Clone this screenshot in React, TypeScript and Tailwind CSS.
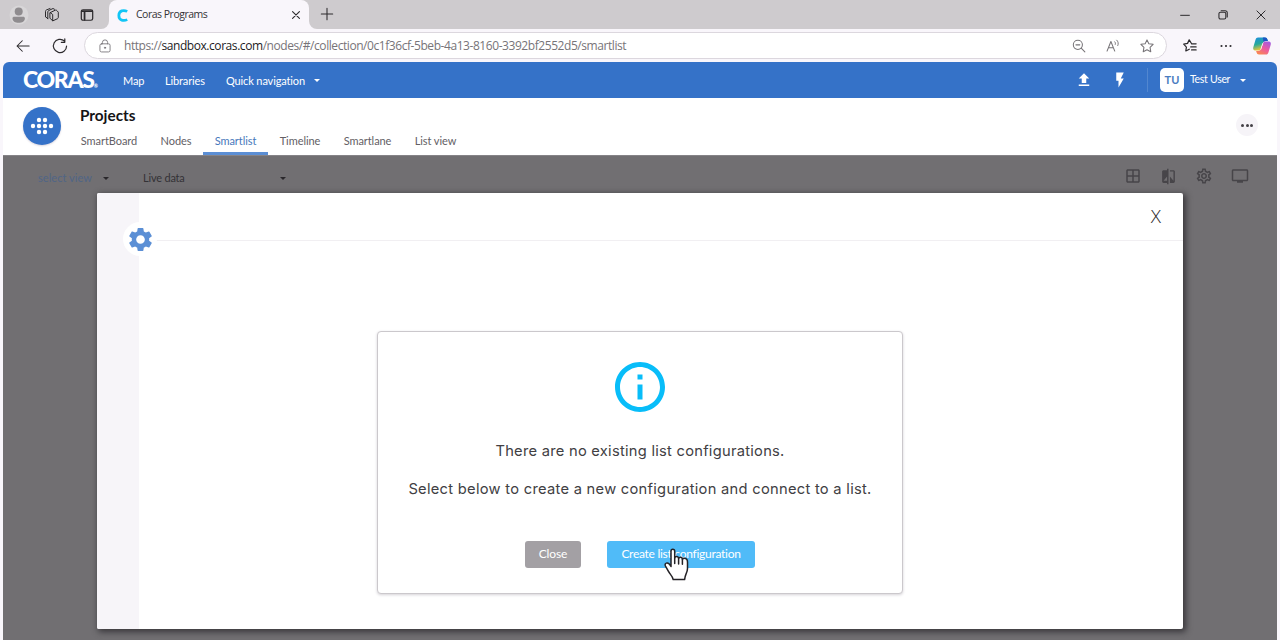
import type { ReactNode } from "react"
import {
  MdCompare,
  MdFileUpload,
  MdFlashOn,
  MdInfoOutline,
  MdOutlineSettings,
  MdOutlineTv,
  MdOutlineWindow,
  MdSettings,
} from "react-icons/md"

const navItems = [
  { label: "Map", width: "w-[22px]", gap: "mr-[20px]" },
  { label: "Libraries", width: "w-[40px]", gap: "mr-[21px]" },
  { label: "Quick navigation", width: "w-[78px]", gap: "mr-[10px]" },
]

const tabs = [
  { label: "SmartBoard", width: "w-[80px]" },
  { label: "Nodes", width: "w-[54px]" },
  { label: "Smartlist", width: "w-[65px]", active: true },
  { label: "Timeline", width: "w-[64px]" },
  { label: "Smartlane", width: "w-[71px]" },
  { label: "List view", width: "w-[65px]" },
]

const dots = [
  [9, 6],
  [15, 6],
  [3, 12],
  [9, 12],
  [15, 12],
  [21, 12],
  [9, 18],
  [15, 18],
]

type LineIconProps = { className?: string; children: ReactNode }

function LineIcon({ className, children }: LineIconProps) {
  return (
    <svg
      viewBox="0 0 16 16"
      className={`shrink-0 ${className ?? ""}`}
      fill="none"
      stroke="currentColor"
      strokeLinecap="round"
      strokeLinejoin="round"
    >
      {children}
    </svg>
  )
}

function Caret({ className }: { className?: string }) {
  return (
    <svg viewBox="0 0 6 3" className={`w-[6px] h-[3px] shrink-0 ${className ?? ""}`} fill="currentColor">
      <path d="M0 0h6L3 3z" />
    </svg>
  )
}

function TabStrip() {
  return (
    <div className="flex h-[29px] bg-[#f9f6fb] text-[#2c2a2d]">
      <div className="flex w-[109px] items-center rounded-br-lg bg-[#cecbce] pl-[9px]">
        <svg viewBox="0 0 20 20" className="w-5 h-5 mr-[15px] shrink-0">
          <circle cx="10" cy="10" r="9.5" fill="#d8d6d8" />
          <circle cx="9.7" cy="6.5" r="4" fill="#8f8c8f" />
          <path d="M3.5 13.2c0-1 .8-1.5 1.7-1.5h9c1 0 1.7.6 1.7 1.5 0 3-2.7 4.6-6.2 4.6s-6.2-1.6-6.2-4.6z" fill="#8f8c8f" />
        </svg>
        <LineIcon className="w-4 h-4 mr-[20px]">
          <path d="M6.2 5.6 11 3.3c.8-.4 1.5-.2 2 .4l1.3 1.5v5.3c0 .5-.3 1-.8 1.2l-4.8 2.2-2.5-2.5z" />
          <path d="m6.2 5.6 2.5 1.9v6.2M3.800 11.700V4.900c0-.6.2-1 .8-1.300L9 1.500l1.500.8M1.500 9.700V4.300c0-.6.3-1 .8-1.300L6 1.500M1.500 9.700l2.300 2" />
        </LineIcon>
        <LineIcon className="w-[14px] h-[14px]">
          <rect x="1.5" y="2" width="13" height="12" rx="2" strokeWidth="1.4" />
          <path d="M2 3.5h12M5.2 4v9.5" strokeWidth="2" />
        </LineIcon>
      </div>
      <div className="flex w-[200px] items-center bg-[#cecbce]">
        <div className="flex h-full w-full items-center rounded-t-lg bg-[#f9f6fb] pl-[8px]">
          <svg viewBox="0 0 12 14" className="w-[11px] h-[13px] mr-[8px] mt-px shrink-0">
            <path d="M11.2 2.5C7.5.8 2 1.2 2 7s5.5 6.2 9.2 4.5" fill="none" stroke="#12c5f5" strokeWidth="3" />
          </svg>
          <span className="w-[71px] whitespace-nowrap text-[10.5px] tracking-[-0.5px] text-[#343235]">Coras Programs</span>
          <LineIcon className="ml-[84px] w-[10px] h-[10px]">
            <path d="m2.5 2.5 11 11m0-11-11 11" strokeWidth="1.8" />
          </LineIcon>
        </div>
      </div>
      <div className="flex flex-1 rounded-bl-lg bg-[#cecbce]">
        <LineIcon className="ml-[11px] mt-[7px] w-[14px] h-[14px]">
          <path d="M8 1.5v13M1.5 8h13" strokeWidth="1.2" />
        </LineIcon>
        <div className="ml-auto mr-[14px] flex items-center gap-[28px]">
          <LineIcon className="w-[10px] h-[10px]">
            <path d="M1 8.5h14" strokeWidth="1.6" />
          </LineIcon>
          <LineIcon className="w-[10px] h-[10px]">
            <rect x="1.5" y="3.5" width="11" height="11" rx="2.5" strokeWidth="1.7" />
            <path d="M5 1.2h6.5c2 0 3.3 1.2 3.3 3.3V11" strokeWidth="1.7" />
          </LineIcon>
          <LineIcon className="w-[10px] h-[10px]">
            <path d="m1.5 1.5 13 13m0-13-13 13" strokeWidth="1.6" />
          </LineIcon>
        </div>
      </div>
    </div>
  )
}

function AddressBar() {
  return (
    <div className="flex h-[33px] items-center pl-[16px] text-[#2c2a2d]">
      <LineIcon className="w-[14px] h-[14px] mr-[22px]">
        <path d="M15 8H1.2m6-6-6 6 6 6" strokeWidth="1.2" />
      </LineIcon>
      <LineIcon className="w-4 h-4 mr-[16px]">
        <path d="M12.4 3A6.6 6.6 0 1 0 14.6 8M12.8.9v3.4H9.3" strokeWidth="1.2" />
      </LineIcon>
      <div className="flex h-[27px] w-[1083px] items-center rounded-full border border-[#dcd7de] bg-white pl-[13px] text-[#777478]">
        <LineIcon className="w-[14px] h-[14px] mr-[12px]">
          <rect x="2.2" y="5.5" width="11.6" height="9.3" rx="1.8" />
          <path d="M5 5.5V4a3 3 0 0 1 6 0v1.5" />
          <circle cx="8" cy="10" r=".7" fill="currentColor" />
        </LineIcon>
        <span className="whitespace-nowrap text-[12px] tracking-[-0.435px]">
          https://<span className="text-[#1d1b1e]">sandbox.coras.com</span>
          /nodes/#/collection/0c1f36cf-5beb-4a13-8160-3392bf2552d5/smartlist
        </span>
        <div className="ml-auto mr-[12px] flex items-center gap-[20px]">
          <LineIcon className="w-[14px] h-[14px]">
            <circle cx="6.7" cy="6.7" r="5.2" strokeWidth="1.2" />
            <path d="m10.5 10.5 4.2 4.2M4.5 6.7h4.4" strokeWidth="1.2" />
          </LineIcon>
          <LineIcon className="w-[14px] h-[14px]">
            <path d="m1.2 13.8 4.4-11 4.4 11M2.7 10h5.8" strokeWidth="1.2" />
            <path d="M10 3.2c.8.8 1 1.9.6 3M12.3 1.3c1.7 1.7 2.2 4 1.2 6.2" strokeWidth="1.1" />
          </LineIcon>
          <LineIcon className="w-[14px] h-[14px]">
            <path d="m8 1 2.1 4.4 4.9.7-3.5 3.5.8 4.9L8 12.2l-4.3 2.3.8-4.9L1 6.1l4.9-.7z" strokeWidth="1.2" />
          </LineIcon>
        </div>
      </div>
      <LineIcon className="ml-[16px] w-[14px] h-[14px]">
        <path d="M9.5 4.9 7.1 1 5.2 5 .8 5.9l3.1 3.3-.7 4.5 4-2M15 5.5H9.8M15 9H8.8M15 12.5H9.8" strokeWidth="1.4" />
      </LineIcon>
      <svg viewBox="0 0 12 4" className="ml-[23px] w-[12px] h-[4px] shrink-0" fill="currentColor">
        <circle cx="1.5" cy="2" r="1.05" />
        <circle cx="6" cy="2" r="1.05" />
        <circle cx="10.5" cy="2" r="1.05" />
      </svg>
      <svg viewBox="0 0 20 20" className="ml-[20px] w-5 h-5 shrink-0">
        <defs>
          <linearGradient id="copilot-a" x1="0" y1="0" x2=".3" y2="1">
            <stop offset="0" stopColor="#1b8de0" />
            <stop offset=".55" stopColor="#27a99a" />
            <stop offset="1" stopColor="#f3c634" />
          </linearGradient>
          <linearGradient id="copilot-b" x1=".8" y1="0" x2=".2" y2="1">
            <stop offset="0" stopColor="#a35be0" />
            <stop offset=".5" stopColor="#ec5aa0" />
            <stop offset="1" stopColor="#fb8a4c" />
          </linearGradient>
        </defs>
        <path d="M6 1.5h7c1.5 0 2 .8 2.4 2l.5 1.6h-2.2c-1.6 0-2.4.8-2.9 2.3L9 12.5c-.5 1.5-1.2 2-2.5 2H3.2C1.5 14.5.8 13 1.3 11.3l2.2-7.5C4 2.3 4.7 1.5 6 1.5z" fill="url(#copilot-a)" />
        <path d="M14 18.5H7c-1.5 0-2-.8-2.4-2l-.5-1.6h2.2c1.6 0 2.4-.8 2.9-2.3L11 7.5c.5-1.5 1.2-2 2.5-2h3.3c1.7 0 2.4 1.5 1.9 3.2l-2.2 7.5c-.5 1.5-1.2 2.3-2.5 2.3z" fill="url(#copilot-b)" />
        <path d="M10.8 1.5H13c1.5 0 2 .8 2.4 2l.5 1.6h-2.2c-1 0-1.7.3-2.2 1z" fill="#1d55c4" />
        <path d="m11.2 7.200-2.100 6.300h-.7l2-6.300z" fill="white" />
      </svg>
    </div>
  )
}

function TopBar() {
  return (
    <div className="flex h-[36px] items-center rounded-t-[6px] bg-[#3572c8] pl-[20px] text-[11px] text-white">
      <span className="w-[74px] whitespace-nowrap pb-px text-[23px] leading-none font-black tracking-[-1.3px]">
        CORAS<span className="text-[5px] tracking-normal">®</span>
      </span>
      <div className="mt-[2px] ml-[26px] flex items-center tracking-[-0.13px]">
        {navItems.map((item) => (
          <span key={item.label} className={`whitespace-nowrap ${item.width} ${item.gap}`}>
            {item.label}
          </span>
        ))}
        <Caret className="mb-[2px]" />
      </div>
      <MdFileUpload className="ml-auto w-[18px] h-[18px]" />
      <MdFlashOn className="ml-[18px] w-[18px] h-[18px]" />
      <div className="ml-[18px] h-[24px] w-px bg-[#5287d0]" />
      <div className="ml-[12px] flex h-[24px] w-[24px] items-center justify-center rounded-[5px] bg-white text-[11px] font-bold text-[#4a7cc0]">
        TU
      </div>
      <span className="ml-[6px] w-[50px] whitespace-nowrap text-[10.5px] tracking-[-0.3px]">Test User</span>
      <Caret className="mr-[31px]" />
    </div>
  )
}

function ProjectHeader() {
  return (
    <div className="flex h-[57px] bg-white">
      <div className="mt-[9px] ml-[20px] flex h-[38px] w-[38px] items-center justify-center rounded-full bg-[#3572c8] shadow-[0_1px_2px_#d9d5de]">
        <svg viewBox="0 0 24 24" className="w-[24px] h-[24px]" fill="white">
          {dots.map(([x, y]) => (
            <circle key={`${x}-${y}`} cx={x} cy={y} r="2.2" />
          ))}
        </svg>
      </div>
      <div className="ml-[8px] flex flex-col">
        <h1 className="mt-[7px] ml-[11px] h-[22px] text-[15.3px] leading-[20px] font-bold text-[#151416]">Projects</h1>
        <div className="flex h-[28px]">
          {tabs.map((tab) => (
            <div
              key={tab.label}
              className={`flex justify-center whitespace-nowrap pt-[6px] text-[11px] leading-[16px] tracking-[-0.07px] ${tab.width} ${
                tab.active ? "border-b-[3px] border-[#5b8ed4] text-[#4878bb]" : "text-[#636065]"
              }`}
            >
              {tab.label}
            </div>
          ))}
        </div>
      </div>
      <div className="mt-[16px] mr-[19px] ml-auto flex h-[22px] w-[22px] items-center justify-center gap-[1.5px] rounded-full bg-[#f6f4f8]">
        <i className="h-[3px] w-[3px] rounded-full bg-[#444146]" />
        <i className="h-[3px] w-[3px] rounded-full bg-[#444146]" />
        <i className="h-[3px] w-[3px] rounded-full bg-[#444146]" />
      </div>
    </div>
  )
}

function Toolbar() {
  return (
    <div className="flex h-[37px] items-center pl-[35px] text-[#474549]">
      <span className="mt-[7px] w-[65px] whitespace-nowrap text-[11px] tracking-[0.05px] text-[#506586]">select view</span>
      <Caret className="mt-[7px] text-[#29272b]" />
      <span className="mt-[8px] ml-[34px] w-[137px] whitespace-nowrap text-[11px] tracking-[-0.2px] text-[#343236]">Live data</span>
      <Caret className="mt-[8px] text-[#29272b]" />
      <div className="mt-[3px] mr-[28px] ml-auto flex items-center gap-[18px]">
        <MdOutlineWindow className="w-[18px] h-[18px]" />
        <MdCompare className="w-[17px] h-[17px]" />
        <MdOutlineSettings className="w-[18px] h-[18px]" />
        <MdOutlineTv className="w-[18px] h-[18px]" />
      </div>
    </div>
  )
}

function HandCursor() {
  return (
    <svg
      viewBox="0 0 26 34"
      className="absolute top-[7px] left-[57px] h-[34px] w-[26px]"
      fill="white"
      stroke="#242226"
      strokeWidth="1.5"
      strokeLinejoin="round"
      strokeLinecap="round"
    >
      <path d="M7 18.5V3.2C7 1.9 7.7 1.2 8.8 1.2s1.9.7 1.9 2v6.7c.3-1 1-1.4 1.9-1.4 1.1 0 1.9.7 2 1.9.4-.8 1-1.1 1.8-1.1 1.2 0 1.9.8 2 2 .4-.7 1-1 1.8-1 2 0 3.3 1.5 3.3 3.9v6.3c0 2.4-.7 3.9-1.5 5.6-.7 1.6-1.1 2.9-1.4 5.500H9.200c-.3-2.400-1.700-4-3.500-6.300-1.900-2.700-2.900-5-4.200-7.200-.7-1.300-.4-2.600.7-3 1.900-.8 3.500.8 4.800 3.400z" />
      <path d="M10.7 9.9v5.6M14.6 10.4v5.5M18.4 11.3v5" fill="none" />
    </svg>
  )
}

function EmptyNotice() {
  return (
    <div className="mt-[90px] ml-[238px] flex h-[263px] w-[526px] flex-col items-center rounded-[4px] border border-[#cbc8cc] bg-white shadow-[0_1px_3px_#d5d2d7]">
      <MdInfoOutline className="mt-[25px] h-[60px] w-[60px] shrink-0 text-[#08bdf9]" />
      <p className="mt-[22px] whitespace-nowrap font-['Inter',sans-serif] text-[14.7px] leading-[24px] tracking-[0.26px] text-[#414043]">
        There are no existing list configurations.
      </p>
      <p className="mt-[14px] whitespace-nowrap font-['Inter',sans-serif] text-[14.7px] leading-[24px] tracking-[0.28px] text-[#414043]">
        Select below to create a new configuration and connect to a list.
      </p>
      <div className="mt-[40px] flex gap-[26px] text-[12px] text-white">
        <button className="h-[27px] w-[56px] rounded-[3px] bg-[#a3a0a4] pb-px tracking-[-0.1px]">Close</button>
        <button className="relative h-[27px] w-[148px] rounded-[3px] bg-[#50bbf8] pb-px tracking-[-0.28px] whitespace-nowrap">
          Create list configuration
          <HandCursor />
        </button>
      </div>
    </div>
  )
}

function ConfigModal() {
  return (
    <div className="ml-[94px] flex h-[436px] w-[1086px] rounded-[2px] bg-white shadow-[2px_2px_6px_1px_#39373b]">
      <div className="w-[42px] shrink-0 rounded-l-[2px] bg-[#f7f5f9]" />
      <div className="flex flex-1 flex-col">
        <div className="flex h-[48px] shrink-0 border-b border-[#f1eff2]">
          <div className="mt-[29px] -ml-[16px] flex h-[34px] w-[34px] items-center justify-center rounded-full bg-white">
            <MdSettings className="w-[29px] h-[29px] text-[#5b8fd5]" />
          </div>
          <span className="mt-[11px] mr-[22px] ml-auto font-['Open_Sans',sans-serif] text-[19px] leading-[24px] font-light text-[#2c2a2d]">
            X
          </span>
        </div>
        <EmptyNotice />
      </div>
    </div>
  )
}

export default function App() {
  return (
    <div className="flex h-[640px] w-[1280px] flex-col overflow-hidden bg-[#f9f6fb] font-['Open_Sans',sans-serif]">
      <TabStrip />
      <AddressBar />
      <div className="mr-[3px] ml-[3px] flex flex-1 flex-col font-['Lato',sans-serif]">
        <TopBar />
        <ProjectHeader />
        <main className="flex-1 border-t border-[#858387] bg-[#716f72]">
          <Toolbar />
          <ConfigModal />
        </main>
      </div>
    </div>
  )
}
